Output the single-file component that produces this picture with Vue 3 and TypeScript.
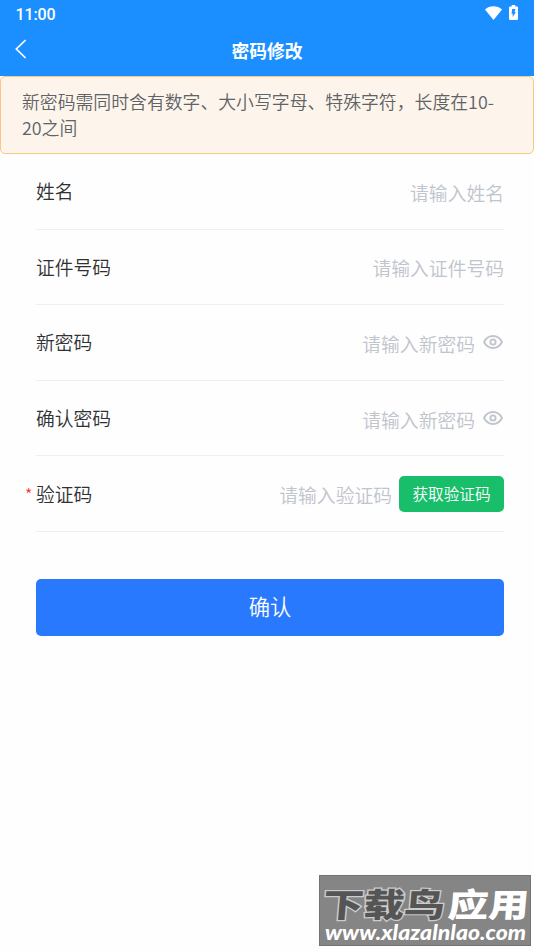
<script setup lang="ts">
import { reactive } from 'vue'

interface Field {
  key: string
  label: string
  placeholder: string
  secret?: boolean
  required?: boolean
  code?: boolean
}

const fields: Field[] = [
  { key: 'name', label: '姓名', placeholder: '请输入姓名' },
  { key: 'idNumber', label: '证件号码', placeholder: '请输入证件号码' },
  { key: 'password', label: '新密码', placeholder: '请输入新密码', secret: true },
  { key: 'confirm', label: '确认密码', placeholder: '请输入新密码', secret: true },
  { key: 'code', label: '验证码', placeholder: '请输入验证码', required: true, code: true },
]

const form = reactive<Record<string, string>>({ name: '', idNumber: '', password: '', confirm: '', code: '' })
const visible = reactive<Record<string, boolean>>({})
</script>

<template>
  <div class="page">
    <header class="header">
      <div class="status">
        <span class="clock">11:00</span>
        <span class="status-icons">
          <svg class="wifi" viewBox="0 0 17 14"><path d="M0 3.4C4.8-.8 12.2-.8 17 3.4L8.5 14Z" fill="#fff" /></svg>
          <svg class="battery" viewBox="0 0 9 15">
            <path d="M2.7 0h3.6v1.4h1.5Q9 1.4 9 2.6v11.2Q9 15 7.8 15H1.2Q0 15 0 13.8V2.6Q0 1.4 1.2 1.4h1.5Z" fill="#fff" />
            <path d="M3.2 4.1h3.2L5.6 7h1.2L3.7 12.2V8.7H2.5Z" fill="#1b8fff" />
          </svg>
        </span>
      </div>
      <nav class="nav">
        <button class="back" aria-label="返回">
          <svg viewBox="0 0 12 20"><path d="M10.6 1 1.3 10l9.3 9" fill="none" stroke="#fff" stroke-width="1.7" /></svg>
        </button>
        <h1>密码修改</h1>
      </nav>
    </header>

    <div class="notice">新密码需同时含有数字、大小写字母、特殊字符，长度在10-20之间</div>

    <form class="form" @submit.prevent>
      <div v-for="f in fields" :key="f.key" class="row">
        <label :for="f.key" class="label"><span v-if="f.required" class="star">*</span>{{ f.label }}</label>
        <input
          :id="f.key"
          v-model="form[f.key]"
          class="input"
          :type="f.secret && !visible[f.key] ? 'password' : 'text'"
          :placeholder="f.placeholder"
          autocomplete="off"
        />
        <svg v-if="f.secret" class="eye" viewBox="0 0 20 14" @click="visible[f.key] = !visible[f.key]">
          <g fill="none" stroke="#c0c4cc" stroke-width="1.9">
            <path d="M1 7C3 3 6.1 1 10 1S17 3 19 7C17 11 13.9 13 10 13S3 11 1 7Z" />
            <circle cx="10" cy="7" r="2.6" />
          </g>
        </svg>
        <button v-if="f.code" type="button" class="get-code">获取验证码</button>
      </div>
      <button type="submit" class="submit">确认</button>
    </form>

    <svg class="watermark" viewBox="0 0 212 71">
      <rect x=".5" y=".5" width="211" height="70" fill="#858585" stroke="#737373" />
      <g class="brand" transform="translate(0 41.5) skewX(-5)">
        <text x="3" y="0" textLength="122" lengthAdjust="spacingAndGlyphs" class="brand-dark">下载鸟</text>
        <text x="128" y="0" textLength="81" lengthAdjust="spacingAndGlyphs" class="brand-light">应用</text>
      </g>
      <text x="6" y="65" textLength="201" lengthAdjust="spacingAndGlyphs" class="site">www.xlazalnlao.com</text>
    </svg>
  </div>
</template>

<style>
body {
  margin: 0;
  background: #fefefe;
}
</style>

<style scoped>
.page {
  position: relative;
  box-sizing: border-box;
  height: 950px;
  overflow: hidden;
  background: #fefefe;
  font-family: "Noto Sans CJK SC", sans-serif;
  font-weight: 350;
}
button {
  border: 0;
  padding: 0;
  font-family: inherit;
  font-weight: inherit;
  color: #fff;
}
.header {
  height: 76px;
  background: #1b8fff;
  color: #fff;
}
.status {
  display: flex;
  justify-content: space-between;
  height: 27px;
  padding: 0 16px 0 15.5px;
}
.clock {
  font: 500 16px/29px Roboto, sans-serif;
  letter-spacing: -0.1px;
}
.status-icons {
  display: flex;
  gap: 7px;
  padding-top: 5px;
}
.wifi {
  width: 17px;
  height: 14px;
  padding-top: 1px;
}
.battery {
  width: 9px;
  height: 15px;
}
.nav {
  display: grid;
  grid-template-columns: 60px 1fr 60px;
  height: 49px;
}
.back {
  display: flex;
  align-items: flex-start;
  padding: 12px 0 0 15px;
  background: none;
}
.back svg {
  width: 12px;
  height: 20px;
}
h1 {
  margin: 0;
  font-size: 17.8px;
  line-height: 47px;
  font-weight: 700;
  text-align: center;
}
.notice {
  box-sizing: border-box;
  height: 78px;
  padding: 11px 21px 0;
  border: 1px solid #fbc784;
  border-radius: 5px;
  background: #fdf5ec;
  color: #606266;
  font-size: 17.85px;
  line-height: 26.4px;
}
.form {
  padding: 0 30px 0 36px;
}
.row {
  display: flex;
  align-items: center;
  box-sizing: border-box;
  height: 75.6px;
  border-bottom: 1px solid #eeeff2;
}
.label {
  position: relative;
  flex: none;
  color: #303133;
  font-size: 18.75px;
  line-height: 28px;
}
.star {
  position: absolute;
  left: -11px;
  top: 0;
  color: #fa3534;
  font-size: 16px;
}
.input {
  flex: 1;
  min-width: 0;
  height: 32px;
  padding: 2px 0 0;
  border: 0;
  outline: 0;
  background: none;
  color: #303133;
  font-family: inherit;
  font-size: 18.8px;
  font-weight: inherit;
  text-align: right;
}
.input::placeholder {
  color: #c0c4cc;
  opacity: 1;
}
.eye {
  flex: none;
  width: 20px;
  height: 14px;
  margin: 0 1px 0 8px;
}
.get-code {
  flex: none;
  width: 105px;
  height: 36px;
  margin-left: 7px;
  padding-bottom: 2px;
  border-radius: 5px;
  background: #19be6b;
  font-size: 15.6px;
  line-height: 32px;
}
.submit {
  display: block;
  width: 100%;
  height: 57px;
  margin-top: 47px;
  padding-bottom: 3px;
  border-radius: 5px;
  background: #2979ff;
  font-size: 21.3px;
  line-height: 52px;
}
.watermark {
  position: absolute;
  left: 319px;
  top: 875px;
  width: 212px;
  height: 71px;
}
.brand {
  font-size: 33px;
  font-weight: 900;
}
.brand-dark {
  fill: #555;
  stroke: #ccc;
  stroke-width: 2.5px;
  paint-order: stroke;
}
.brand-light {
  fill: #fff;
}
.site {
  fill: #fff;
  font: italic 900 20px Lato, sans-serif;
}
</style>
